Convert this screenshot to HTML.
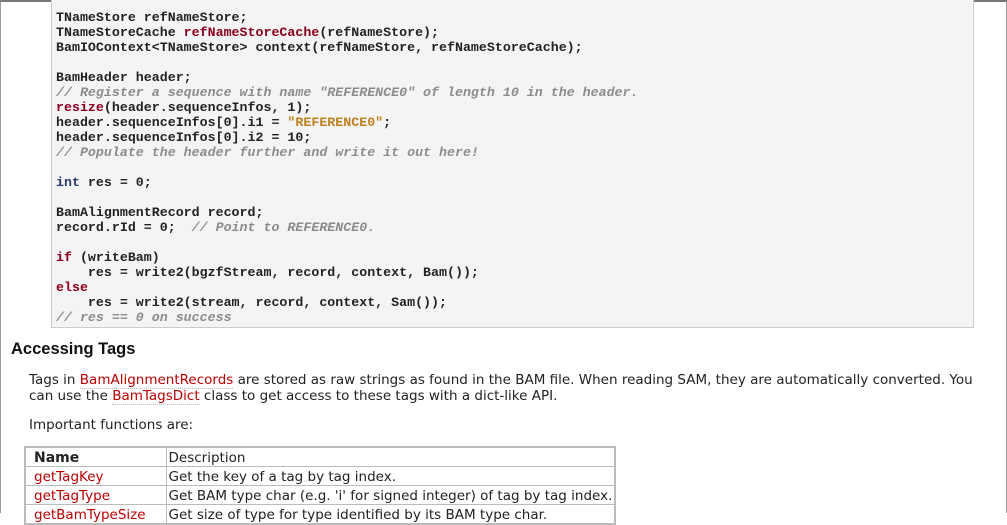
<!DOCTYPE html>
<html><head><meta charset="utf-8"><style>
html,body{margin:0;padding:0;}
body{width:1007px;height:513px;overflow:hidden;background:#fff;position:relative;font-family:"DejaVu Sans","Liberation Sans",sans-serif;}
.frame{position:absolute;left:0;top:0;width:1005px;height:511px;border-left:1px solid #999;border-right:1px solid #999;border-top:2px solid #777;}
.code{position:absolute;left:51px;top:-5px;width:921px;height:331px;background:#f4f4f4;border:1px solid #ccc;}
pre{margin:0;position:absolute;left:4px;top:14px;font-family:"Liberation Mono",monospace;font-weight:bold;font-size:13.3px;line-height:15px;color:#222;}
.k{color:#8b0020}.t{color:#2a3a6a}.c{color:#8c8c8c;font-style:italic;font-weight:bold}.s{color:#c08020}
h2{position:absolute;left:11px;top:340px;margin:0;font-family:"Liberation Sans",sans-serif;font-size:16.5px;font-weight:bold;color:#111;}
.p{position:absolute;left:29px;font-size:13.5px;color:#222;white-space:nowrap;line-height:16px;}
a{color:#b00;text-decoration:none;border-bottom:1px dotted #bbb;}
table{position:absolute;left:24px;top:446px;border-collapse:collapse;font-size:13.5px;color:#222;border:2px solid #bbb;table-layout:fixed;width:592px;}
td{border:1px solid #bbb;padding:1px 2px 0 8px;height:17px;white-space:nowrap;overflow:hidden;}
td+td{padding-left:2px;}
</style></head><body>
<div class="frame"></div>
<div class="code"><pre>TNameStore refNameStore;
TNameStoreCache <span class="k">refNameStoreCache</span>(refNameStore);
BamIOContext&lt;TNameStore&gt; context(refNameStore, refNameStoreCache);

BamHeader header;
<span class="c">// Register a sequence with name "REFERENCE0" of length 10 in the header.</span>
<span class="k">resize</span>(header.sequenceInfos, 1);
header.sequenceInfos[0].i1 = <span class="s">"REFERENCE0"</span>;
header.sequenceInfos[0].i2 = 10;
<span class="c">// Populate the header further and write it out here!</span>

<span class="t">int</span> res = 0;

BamAlignmentRecord record;
record.rId = 0;  <span class="c">// Point to REFERENCE0.</span>

<span class="k">if</span> (writeBam)
    res = write2(bgzfStream, record, context, Bam());
<span class="k">else</span>
    res = write2(stream, record, context, Sam());
<span class="c">// res == 0 on success</span></pre></div>
<h2>Accessing Tags</h2>
<div class="p" style="top:372px">Tags in <a>BamAlignmentRecords</a> are stored as raw strings as found in the BAM file. When reading SAM, they are automatically converted. You</div>
<div class="p" style="top:388px">can use the <a>BamTagsDict</a> class to get access to these tags with a dict-like API.</div>
<div class="p" style="top:417px">Important functions are:</div>
<table>
<colgroup><col style="width:141px"><col></colgroup>
<tr><td style="font-weight:bold;font-size:14px">Name</td><td>Description</td></tr>
<tr><td><a>getTagKey</a></td><td>Get the key of a tag by tag index.</td></tr>
<tr><td><a>getTagType</a></td><td>Get BAM type char (e.g. 'i' for signed integer) of tag by tag index.</td></tr>
<tr><td><a>getBamTypeSize</a></td><td>Get size of type for type identified by its BAM type char.</td></tr>
</table>
</body></html>
